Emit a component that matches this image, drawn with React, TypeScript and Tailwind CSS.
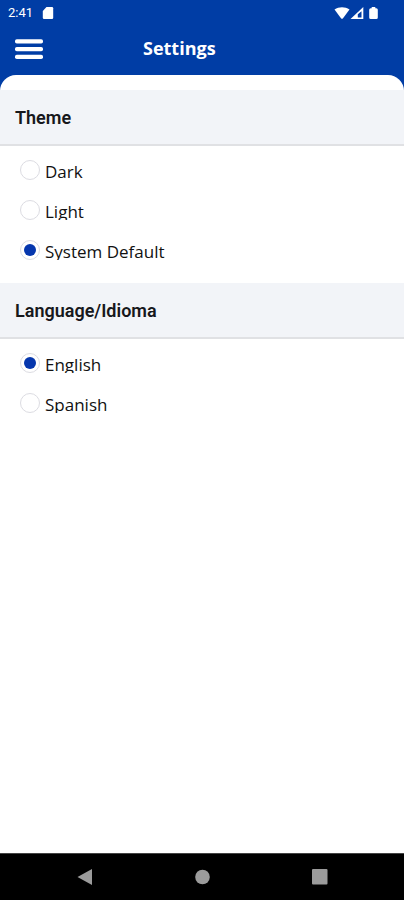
import { useState } from "react";

const themes = ["Dark", "Light", "System Default"];
const languages = ["English", "Spanish"];

function StatusBar() {
  return (
    <div className="flex h-[25px] items-center pl-2 pr-[26px] text-white">
      <span className="font-[Roboto,sans-serif] text-[13px] leading-6">2:41</span>
      <svg className="ml-[9px] h-3 w-3" viewBox="0 0 12 12" fill="currentColor" aria-hidden>
        <path d="M4.5 0H10a1.2 1.2 0 0 1 1.2 1.2v9.6A1.2 1.2 0 0 1 10 12H2a1.2 1.2 0 0 1-1.2-1.2V4Z" />
      </svg>
      <svg className="ml-auto h-3 w-4" viewBox="0 0 16 12" fill="currentColor" aria-hidden>
        <path d="M.5 2.5C5-.6 11-.6 15.5 2.5L9 11.3q-1 1-2 0Z" />
      </svg>
      <svg className="h-3 w-[14px]" viewBox="0 0 14 12" aria-hidden>
        <path d="M13.3 0v12H.5Z" fill="currentColor" />
        <path d="M11.5 4.2v6.2H7.8V7.2Z" fill="#003da5" />
      </svg>
      <svg className="ml-[5px] h-3 w-[9px]" viewBox="0 0 9 12" fill="currentColor" aria-hidden>
        <path d="M2.7 0h3.6v1.2h1A1.5 1.5 0 0 1 8.8 2.7v7.8A1.5 1.5 0 0 1 7.3 12H1.7A1.5 1.5 0 0 1 .2 10.5V2.7a1.5 1.5 0 0 1 1.5-1.5h1Z" />
      </svg>
    </div>
  );
}

function OptionGroup({
  title,
  name,
  options,
  initial
}: {
  title: string;
  name: string;
  options: string[];
  initial: string;
}) {
  const [selected, setSelected] = useState(initial);

  return (
    <section aria-labelledby={`${name}-title`}>
      <div className="border-b-2 border-[#e0e1e4] bg-[#f2f4f8] px-[15px] pt-px">
        <h2 id={`${name}-title`} className="font-[Roboto,sans-serif] text-lg font-semibold leading-[53px] text-[#17181c]">
          {title}
        </h2>
      </div>
      <div className="px-5 pb-[13px] pt-1">
        {options.map((option) => (
          <label key={option} className="flex h-10 items-center gap-[5px]">
            <input
              type="radio"
              name={name}
              value={option}
              checked={selected === option}
              onChange={() => setSelected(option)}
              className="grid h-5 w-5 shrink-0 appearance-none place-items-center rounded-full border border-[#dcdce2] bg-white before:h-3 before:w-3 before:rounded-full checked:before:bg-[#0536ad]"
            />
            <span className="h-5 overflow-hidden text-[17px] font-medium leading-6 text-[#111]">{option}</span>
          </label>
        ))}
      </div>
    </section>
  );
}

function NavigationBar() {
  return (
    <nav className="flex h-[47px] items-center justify-between border-t border-[#444] bg-black px-[76px] text-[#9b9b9b]">
      <button type="button" aria-label="Back">
        <svg className="h-4 w-4" viewBox="0 0 16 16" fill="currentColor" aria-hidden>
          <path d="M16 0v16L1.5 8Z" />
        </svg>
      </button>
      <button type="button" aria-label="Home">
        <svg className="h-4 w-4" viewBox="0 0 16 16" fill="currentColor" aria-hidden>
          <circle cx="8.5" cy="8" r="7.3" />
        </svg>
      </button>
      <button type="button" aria-label="Overview">
        <svg className="h-4 w-4" viewBox="0 0 16 16" fill="currentColor" aria-hidden>
          <rect width="15.5" height="15.5" rx="1" />
        </svg>
      </button>
    </nav>
  );
}

export default function App() {
  return (
    <div className="flex min-h-screen flex-col bg-[#003da5] font-['Open_Sans',sans-serif]">
      <StatusBar />
      <header className="flex h-[50px] items-start pl-[15px] pt-[11px] text-white">
        <button type="button" aria-label="Menu" className="py-[3px]">
          <svg className="h-5 w-7" viewBox="0 0 28 20" fill="currentColor" aria-hidden>
            <rect y=".3" width="28" height="4.3" rx="1.8" />
            <rect y="8" width="28" height="4.3" rx="1.8" />
            <rect y="15.7" width="28" height="4.3" rx="1.8" />
          </svg>
        </button>
        <h1 className="ml-[100px] text-lg font-bold leading-6">Settings</h1>
      </header>
      <main className="grow rounded-t-2xl bg-white pt-[15px]">
        <OptionGroup title="Theme" name="theme" options={themes} initial="System Default" />
        <OptionGroup title="Language/Idioma" name="language" options={languages} initial="English" />
      </main>
      <NavigationBar />
    </div>
  );
}
